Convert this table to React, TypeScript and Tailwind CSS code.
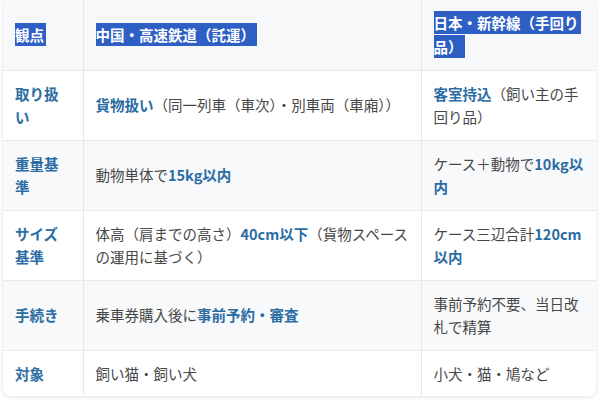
import React from 'react';

type Seg = { t: string; b?: boolean };

const rows: { label: string; cn: Seg[]; jp: Seg[] }[] = [
  {
    label: '取り扱い',
    cn: [{ t: '貨物扱い', b: true }, { t: '（同一列車（車次）・別車両（車廂））' }],
    jp: [{ t: '客室持込', b: true }, { t: '（飼い主の手回り品）' }],
  },
  {
    label: '重量基準',
    cn: [{ t: '動物単体で' }, { t: '15kg以内', b: true }],
    jp: [{ t: 'ケース＋動物で' }, { t: '10kg以内', b: true }],
  },
  {
    label: 'サイズ基準',
    cn: [{ t: '体高（肩までの高さ）' }, { t: '40cm以下', b: true }, { t: '（貨物スペースの運用に基づく）' }],
    jp: [{ t: 'ケース三辺合計' }, { t: '120cm以内', b: true }],
  },
  {
    label: '手続き',
    cn: [{ t: '乗車券購入後に' }, { t: '事前予約・審査', b: true }],
    jp: [{ t: '事前予約不要、当日改札で精算' }],
  },
  {
    label: '対象',
    cn: [{ t: '飼い猫・飼い犬' }],
    jp: [{ t: '小犬・猫・鳩など' }],
  },
];

function Cell({ segs }: { segs: Seg[] }) {
  return (
    <>
      {segs.map((s, i) =>
        s.b ? (
          <span key={i} className="font-bold text-[#2b6ca3]">
            {s.t}
          </span>
        ) : (
          <span key={i}>{s.t}</span>
        )
      )}
    </>
  );
}

// selected-looking header text
function Sel({ children }: { children: React.ReactNode }) {
  return (
    <span className="bg-[#2d5fc4] text-white font-bold box-decoration-clone py-[1px] pr-[2px]">{children}</span>
  );
}

export default function App() {
  return (
    <div
      className="w-[600px] h-[403px] bg-white overflow-hidden pl-[3px] pr-[4px]"
      style={{ fontFamily: '"Noto Sans CJK JP", "Noto Sans", sans-serif' }}
    >
      <div className="rounded-b-lg shadow-[0_1px_4px_rgba(0,0,0,0.12)] overflow-hidden">
        <table className="w-full border-collapse table-fixed text-[14.5px] leading-[23.5px] text-[#474747]">
          <colgroup>
            <col className="w-[80px]" />
            <col className="w-[338px]" />
            <col />
          </colgroup>
          <thead>
            <tr className="bg-[#f7f8fa] h-[70px]">
              <th className="text-left align-middle px-3 py-[11px] font-bold">
                <Sel>観点</Sel>
              </th>
              <th className="text-left align-middle px-3 py-[11px] font-bold border-l border-[#e6e7ea]">
                <Sel>中国・高速鉄道（託運）</Sel>
              </th>
              <th className="text-left align-middle pl-3 pr-2 py-[11px] font-bold border-l border-[#e6e7ea]">
                <Sel>日本・新幹線（手回り品）</Sel>
              </th>
            </tr>
          </thead>
          <tbody>
            {rows.map((r, i) => (
              <tr
                key={r.label}
                className={`${i % 2 === 1 ? 'bg-[#f8f9fb]' : 'bg-white'} border-t border-[#e8e9ec]`}
              >
                <td className="px-3 py-[11px] align-middle font-bold text-[#2b6ca3]">{r.label}</td>
                <td className="px-3 py-[11px] align-middle border-l border-[#e6e7ea]">
                  <Cell segs={r.cn} />
                </td>
                <td className="pl-3 pr-2 py-[11px] align-middle border-l border-[#e6e7ea]">
                  <Cell segs={r.jp} />
                </td>
              </tr>
            ))}
          </tbody>
        </table>
      </div>
    </div>
  );
}
